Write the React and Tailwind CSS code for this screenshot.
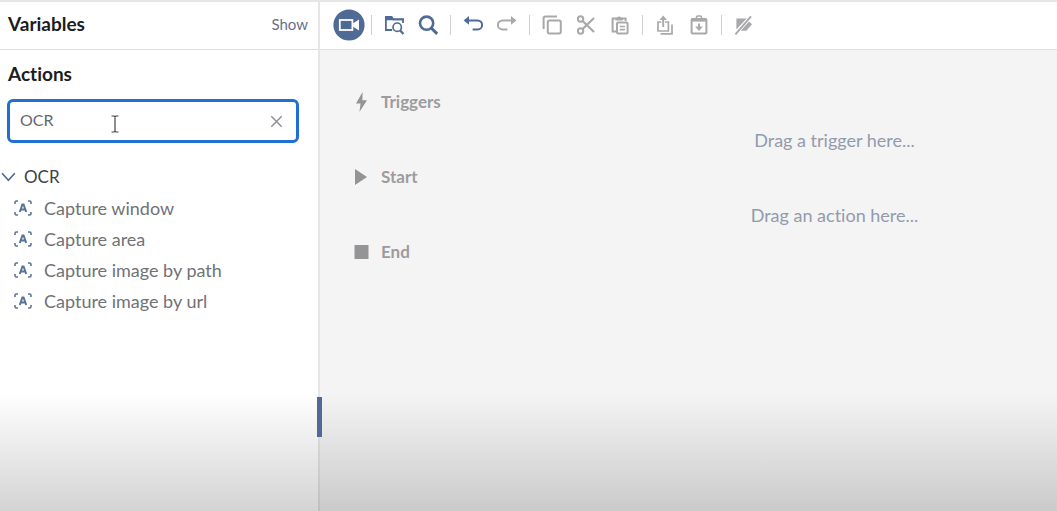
import { useState } from "react";

function Icon({ children, size = 20 }) {
  return (
    <svg
      width={size}
      height={size}
      viewBox={`0 0 ${size} ${size}`}
      fill="none"
      stroke="currentColor"
      strokeWidth="2"
      aria-hidden="true"
      className="shrink-0"
    >
      {children}
    </svg>
  );
}

const icons = {
  record: (
    <Icon size={32}>
      <circle cx="16" cy="16" r="15.6" fill="#4f6b95" stroke="none" />
      <rect x="6.8" y="11" width="12.6" height="10" stroke="#fff" strokeWidth="1.8" />
      <path d="M20.2 14.2 26 10.6V21.4L20.2 17.8Z" fill="#fff" stroke="none" />
    </Icon>
  ),
  browse: (
    <Icon>
      <path d="M8 15H1.9V2H7.5L9 4.4H19V8" strokeWidth="1.8" />
      <path d="M1 1H7.8L9.6 3.5H20V5.3H1Z" fill="currentColor" stroke="none" />
      <circle cx="13.2" cy="12.2" r="4.2" strokeWidth="1.7" />
      <path d="M16 15.2 19.4 19" strokeWidth="2.2" />
    </Icon>
  ),
  search: (
    <Icon>
      <circle cx="8.6" cy="8.2" r="6.6" strokeWidth="2.6" />
      <path d="M13.2 13 19.2 18.8" strokeWidth="3" />
    </Icon>
  ),
  undo: (
    <Icon>
      <path d="M4.5 5.4H14.6A4.5 4.5 0 0 1 14.6 14.4H9.6" strokeWidth="2" />
      <path d="M0.6 5.4 6 1V9.8Z" fill="currentColor" stroke="none" />
    </Icon>
  ),
  redo: (
    <Icon>
      <path d="M15.5 5.4H5.4A4.5 4.5 0 0 0 5.4 14.4H10.4" strokeWidth="2" />
      <path d="M19.4 5.4 14 1V9.8Z" fill="currentColor" stroke="none" />
    </Icon>
  ),
  copy: (
    <Icon>
      <path d="M1.6 14V3A1.6 1.6 0 0 1 3.2 1.4H15" strokeWidth="2" />
      <rect x="5.8" y="5.4" width="13" height="13" rx="1.6" strokeWidth="2" />
    </Icon>
  ),
  cut: (
    <Icon>
      <circle cx="4.6" cy="4" r="2.7" strokeWidth="2" />
      <circle cx="4.6" cy="16" r="2.7" strokeWidth="2" />
      <path d="M6.6 6 18 17M6.6 14 18 3" strokeWidth="2.2" />
    </Icon>
  ),
  paste: (
    <Icon>
      <path d="M6 16.5H2.6V3.6H15.6V6" strokeWidth="2" />
      <path d="M5.4 5.6V2.8H7.2A2 2 0 0 1 11 2.8H12.8V5.6Z" fill="currentColor" stroke="none" />
      <rect x="7" y="7.6" width="10.6" height="11" rx="1" strokeWidth="2" />
      <path d="M9.8 11.5H15M9.8 14.6H15" strokeWidth="1.6" />
    </Icon>
  ),
  share: (
    <Icon>
      <path d="M6.4 7H3V16H13.4V7H10" strokeWidth="1.7" />
      <path d="M8.2 12V3" strokeWidth="1.9" />
      <path d="M4.4 5 8.2 0.6 12 5Z" fill="currentColor" stroke="none" />
      <path d="M5.6 18.8H17V9.4" strokeWidth="1.7" />
    </Icon>
  ),
  download: (
    <Icon>
      <rect x="2.6" y="4" width="14.8" height="14.6" rx="1" strokeWidth="2" />
      <path d="M2.6 3H17.4V6.6H2.6Z" fill="currentColor" stroke="none" />
      <path d="M7.4 4V2.4A1.4 1.4 0 0 1 8.8 1H11.2A1.4 1.4 0 0 1 12.6 2.4V4" strokeWidth="1.6" />
      <path d="M10 8.4V13" strokeWidth="2" />
      <path d="M6.2 11.6H13.8L10 16Z" fill="currentColor" stroke="none" />
    </Icon>
  ),
  disabled: (
    <Icon>
      <path d="M2.4 3.4H12.6L2.4 14.6Z" fill="currentColor" stroke="none" />
      <path d="M15 6.4 18 9.2 12.4 15.8H6.8Z" fill="currentColor" stroke="none" />
      <path d="M1.4 19.4 17 1.4" strokeWidth="1.9" />
    </Icon>
  ),
};

const toolGroups = [
  [["Record", "record", true]],
  [["Browse", "browse", true], ["Search", "search", true]],
  [["Undo", "undo", true], ["Redo", "redo", false]],
  [["Copy", "copy", false], ["Cut", "cut", false], ["Paste", "paste", false]],
  [["Export", "share", false], ["Import", "download", false]],
  [["Disable", "disabled", false]],
];

function Toolbar() {
  return (
    <header className="flex h-12 shrink-0 items-center border-b border-[#e0e0e0] bg-white pb-0.5 pl-3">
      {toolGroups.map((group, i) => (
        <div key={i} className="flex items-center">
          {i > 0 && <span className="mx-[5px] h-5 w-px bg-[#cfcfcf]" />}
          {group.map(([label, icon, active]) => (
            <button
              key={label}
              type="button"
              aria-label={label}
              className={`flex h-8 w-[34px] items-center justify-center ${
                active ? "text-[#4f6b95]" : "text-[#a9a9ab]"
              }`}
            >
              {icons[icon]}
            </button>
          ))}
        </div>
      ))}
    </header>
  );
}

function CaptureIcon() {
  return (
    <svg width="18" height="16" viewBox="0 0 18 16" fill="none" stroke="#5b7397" strokeWidth="1.6" aria-hidden="true">
      <path d="M4 1H2.4A1.4 1.4 0 0 0 1 2.4V4M14 1H15.6A1.4 1.4 0 0 1 17 2.4V4M4 15H2.4A1.4 1.4 0 0 1 1 13.6V12M14 15H15.6A1.4 1.4 0 0 0 17 13.6V12" />
      <path d="M5.8 12 8.4 4.4H9.6L12.2 12M6.8 9.6H11.2" strokeWidth="2" />
    </svg>
  );
}

const actions = ["Capture window", "Capture area", "Capture image by path", "Capture image by url"];

function Sidebar() {
  const [query, setQuery] = useState("OCR");
  return (
    <aside className="relative w-80 shrink-0 border-r-2 border-[#e6e6e8] bg-white">
      <div className="flex h-12 items-center justify-between border-b border-[#e0e0e0] pr-2.5 pb-0.5 pl-2">
        <h2 className="text-[19px] font-bold text-[#1b1d21]">Variables</h2>
        <button type="button" className="text-[15px] text-[#66708c]">
          Show
        </button>
      </div>
      <h2 className="flex h-12 items-center pl-2 text-[19px] font-bold text-[#1b1d21]">Actions</h2>
      <div className="relative mt-px mr-[19px] ml-[7px]">
        <input
          aria-label="Search actions"
          value={query}
          onChange={(e) => setQuery(e.target.value)}
          className="block h-11 w-full rounded-md border-[3px] border-[#1f70d2] pr-10 pb-1 pl-2.5 text-base text-[#66686c] outline-none"
        />
        <button
          type="button"
          aria-label="Clear search"
          onClick={() => setQuery("")}
          className="absolute top-4 right-4 text-[#8c8f94]"
        >
          <svg width="13" height="13" viewBox="0 0 14 14" stroke="currentColor" strokeWidth="1.6" aria-hidden="true">
            <path d="M1.4 1.4 12.6 12.6M12.6 1.4 1.4 12.6" />
          </svg>
        </button>
        <svg
          width="10"
          height="18"
          viewBox="0 0 10 18"
          fill="none"
          stroke="#444"
          strokeWidth="1.2"
          aria-hidden="true"
          className="pointer-events-none absolute top-4 left-[103px]"
        >
          <path d="M1.5 1H4L5 1.8 6 1H8.5M5 1.5V16.5M1.5 17H4L5 16.2 6 17H8.5" />
        </svg>
      </div>
      <button type="button" className="mt-[18px] flex h-[31px] items-center gap-2 pl-px text-[17px] text-[#3f4247]">
        <svg width="15" height="10" viewBox="0 0 15 10" fill="none" stroke="#4f6b95" strokeWidth="1.6" aria-hidden="true">
          <path d="M1 1.2 7.4 8.4 13.8 1.2" />
        </svg>
        OCR
      </button>
      <ul>
        {actions.map((name) => (
          <li key={name} className="flex h-[31px] items-center gap-3 pl-3.5 text-lg text-[#707277]">
            <CaptureIcon />
            {name}
          </li>
        ))}
      </ul>
      <span className="absolute top-[395px] -right-1 z-10 h-10 w-[5px] bg-[#4f6b95]" />
    </aside>
  );
}

function Section({ label, children }) {
  return (
    <div className="flex h-[38px] items-center gap-3 pl-[34px] text-[17px] font-bold text-[#9c9c9e]">
      <svg width="15" height="20" viewBox="0 0 15 20" fill="#949496" aria-hidden="true">
        {children}
      </svg>
      {label}
    </div>
  );
}

function DropHint({ children }) {
  return (
    <p className="flex h-[37px] items-center justify-center pl-[292px] text-lg text-[#929bab]">{children}</p>
  );
}

export default function App() {
  return (
    <div className="relative flex min-h-screen border-t-2 border-[#e6e6e6] font-[Lato,sans-serif] [font-variant-ligatures:none]">
      <Sidebar />
      <div className="flex min-w-0 flex-1 flex-col">
        <Toolbar />
        <main className="flex-1 bg-[#f4f4f4] pt-[33px]">
          <Section label="Triggers">
            <path d="M8.6 0 2 11.4H6.6L5.4 20 13 8.2H8.4Z" />
          </Section>
          <DropHint>Drag a trigger here...</DropHint>
          <Section label="Start">
            <path d="M1 2V18L13 10Z" />
          </Section>
          <DropHint>Drag an action here...</DropHint>
          <Section label="End">
            <path d="M0.5 3H14.5V17H0.5Z" />
          </Section>
        </main>
      </div>
      <div className="pointer-events-none absolute inset-x-0 bottom-0 h-[118px] bg-linear-to-b from-transparent to-black/17" />
    </div>
  );
}
